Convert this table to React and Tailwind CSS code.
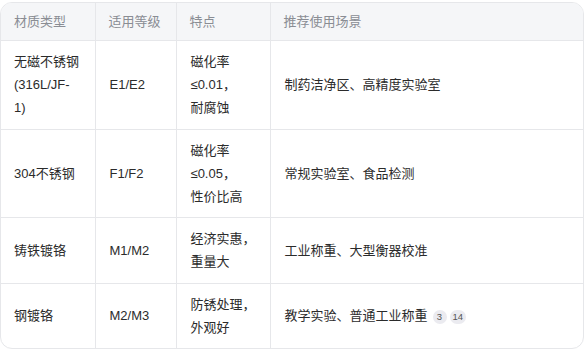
import React from "react";

const rows = [
  {
    type: ["无磁不锈钢", "(316L/JF-", "1)"],
    grade: "E1/E2",
    feature: ["磁化率", "≤0.01，", "耐腐蚀"],
    scene: "制药洁净区、高精度实验室",
  },
  {
    type: ["304不锈钢"],
    grade: "F1/F2",
    feature: ["磁化率", "≤0.05，", "性价比高"],
    scene: "常规实验室、食品检测",
  },
  {
    type: ["铸铁镀铬"],
    grade: "M1/M2",
    feature: ["经济实惠，", "重量大"],
    scene: "工业称重、大型衡器校准",
  },
  {
    type: ["钢镀铬"],
    grade: "M2/M3",
    feature: ["防锈处理，", "外观好"],
    scene: "教学实验、普通工业称重",
    refs: ["3", "14"],
  },
];

const headers = ["材质类型", "适用等级", "特点", "推荐使用场景"];

// small citation bubble after the last cell
const Ref = ({ n }) => (
  <span className="inline-flex items-center justify-center align-middle h-[14px] min-w-[14px] px-[3px] ml-[3px] rounded-full bg-[#ebebf0] text-[9.5px] leading-none text-[#555]">
    {n}
  </span>
);

const Lines = ({ items }) =>
  items.map((t) => (
    <span key={t} className="block whitespace-nowrap">
      {t}
    </span>
  ));

export default function App() {
  return (
    <div
      className="w-[586px] h-[354px] bg-white pt-[2px]"
      style={{ fontFamily: '"Liberation Sans", "Noto Sans CJK SC", sans-serif' }}
    >
      <div className="w-[584px] border border-[#e6e7ea] rounded-xl overflow-hidden">
        <table className="w-full border-collapse table-fixed text-[13px] leading-[23px]">
          <colgroup>
            <col className="w-[94px]" />
            <col className="w-[81px]" />
            <col className="w-[94px]" />
            <col />
          </colgroup>
          <thead>
            <tr className="bg-[#f5f6f8]">
              {headers.map((h, i) => (
                <th
                  key={h}
                  className={`text-left font-normal text-[#8a8d94] px-[13px] py-[7px] border-b border-[#e6e7ea] ${
                    i < 3 ? "border-r" : ""
                  }`}
                >
                  {h}
                </th>
              ))}
            </tr>
          </thead>
          <tbody className="text-[#2b2b2b]">
            {rows.map((r, idx) => (
              <tr
                key={r.grade}
                className={idx < rows.length - 1 ? "border-b border-[#e6e7ea]" : ""}
              >
                <td className="px-[13px] py-[9.25px] border-r border-[#e6e7ea] align-middle">
                  <Lines items={r.type} />
                </td>
                <td className="px-[14px] py-[9.25px] border-r border-[#e6e7ea] align-middle">
                  {r.grade}
                </td>
                <td className="px-[14px] py-[9.25px] border-r border-[#e6e7ea] align-middle">
                  <Lines items={r.feature} />
                </td>
                <td className="px-[14px] py-[9.25px] align-middle">
                  {r.scene}
                  {r.refs && (
                    <>
                      <span className="ml-[2px]" />
                      {r.refs.map((n) => (
                        <Ref key={n} n={n} />
                      ))}
                    </>
                  )}
                </td>
              </tr>
            ))}
          </tbody>
        </table>
      </div>
    </div>
  );
}
